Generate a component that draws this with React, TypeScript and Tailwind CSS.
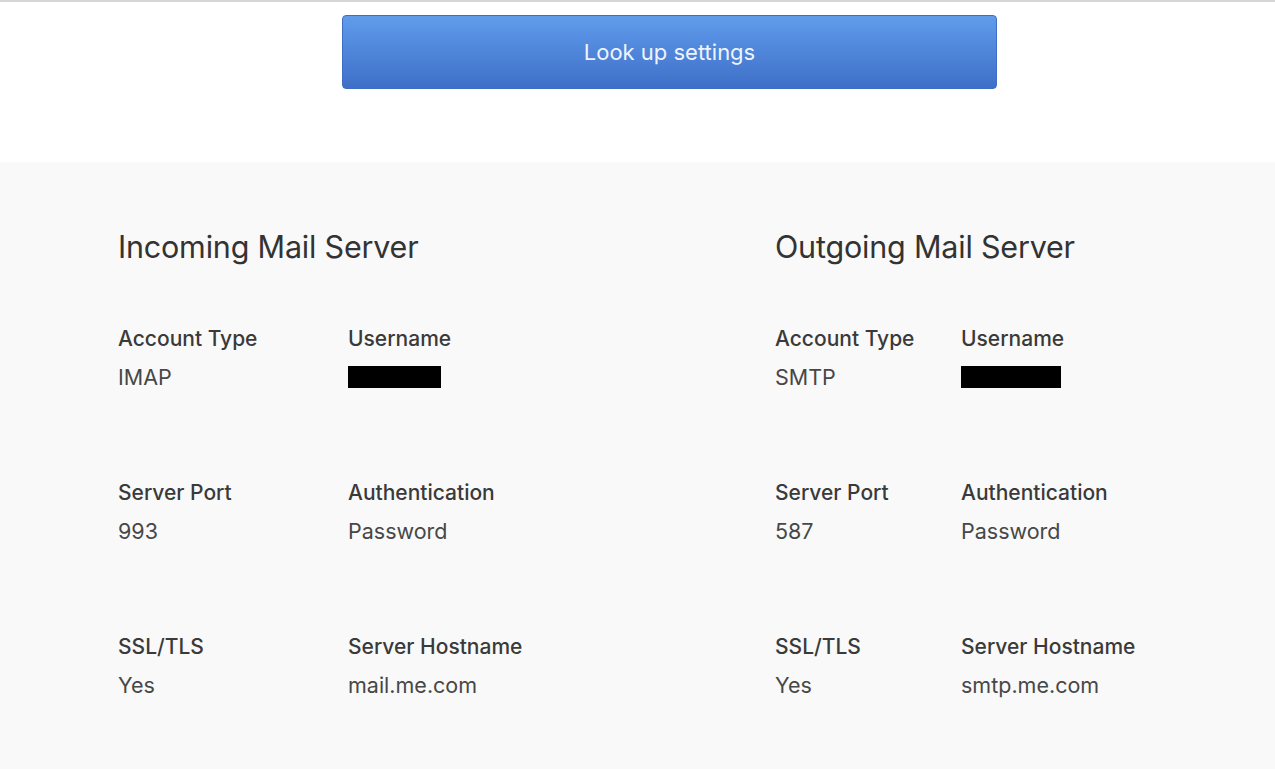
import React from 'react'

type Field = { label: string; value?: string; redacted?: number }

const incoming: Field[][] = [
  [{ label: 'Account Type', value: 'IMAP' }, { label: 'Username', redacted: 93 }],
  [{ label: 'Server Port', value: '993' }, { label: 'Authentication', value: 'Password' }],
  [{ label: 'SSL/TLS', value: 'Yes' }, { label: 'Server Hostname', value: 'mail.me.com' }],
]

const outgoing: Field[][] = [
  [{ label: 'Account Type', value: 'SMTP' }, { label: 'Username', redacted: 100 }],
  [{ label: 'Server Port', value: '587' }, { label: 'Authentication', value: 'Password' }],
  [{ label: 'SSL/TLS', value: 'Yes' }, { label: 'Server Hostname', value: 'smtp.me.com' }],
]

function FieldCell({ field }: { field: Field }) {
  return (
    <div>
      <p className="text-[21px] leading-[28px] font-medium text-[#3a3a3a]">{field.label}</p>
      <div className="mt-[10px] h-[28px] flex items-center">
        {field.redacted ? (
          <div className="h-[22px] bg-black" style={{ width: field.redacted }} />
        ) : (
          <p className="text-[21.5px] leading-[28px] text-[#474747]">{field.value}</p>
        )}
      </div>
    </div>
  )
}

function ServerBlock({ title, rows, labelCol }: { title: string; rows: Field[][]; labelCol: string }) {
  return (
    <div>
      <h2 className="text-[30.5px] leading-[36px] font-normal text-[#333] tracking-[-0.2px]">{title}</h2>
      <div className="mt-[60px] flex flex-col gap-[88px]">
        {rows.map((row, i) => (
          <div key={i} className={`grid ${labelCol}`}>
            {row.map((f) => (
              <FieldCell key={f.label} field={f} />
            ))}
          </div>
        ))}
      </div>
    </div>
  )
}

export default function App() {
  return (
    <div className="w-[1275px] h-[769px] overflow-hidden bg-white" style={{ fontFamily: 'Inter, "Liberation Sans", sans-serif' }}>
      <div className="h-[162px] border-t-2 border-[#d6d6d6] pl-[342px]">
        <button className="mt-[13px] w-[655px] h-[74px] rounded-[4px] border border-[#3d6ec4] bg-gradient-to-b from-[#619ceb] to-[#3e6fc8] text-[22px] text-[#eef4fd] font-normal">
          Look up settings
        </button>
      </div>
      <div className="h-[607px] bg-[#f9f9f9] pt-[67px] pl-[118px] flex">
        <div className="w-[657px]">
          <ServerBlock title="Incoming Mail Server" rows={incoming} labelCol="grid-cols-[230px_1fr]" />
        </div>
        <div className="flex-1">
          <ServerBlock title="Outgoing Mail Server" rows={outgoing} labelCol="grid-cols-[186px_1fr]" />
        </div>
      </div>
    </div>
  )
}
